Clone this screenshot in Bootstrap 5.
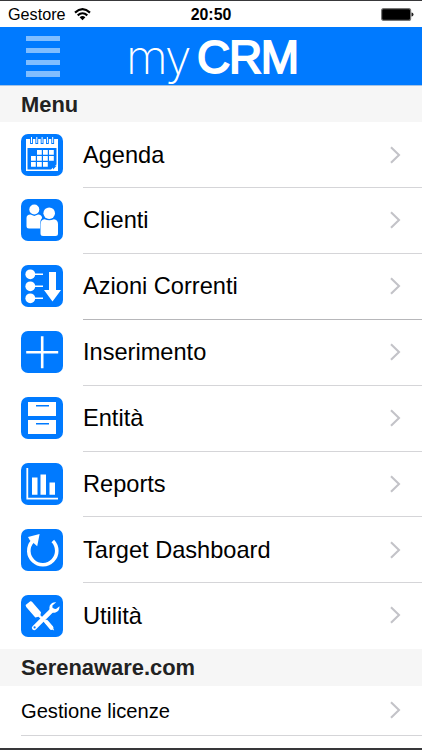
<!DOCTYPE html>
<html lang="it">
<head>
<meta charset="utf-8">
<meta name="viewport" content="width=device-width, initial-scale=1">
<title>myCRM</title>
<link rel="stylesheet" href="https://cdn.jsdelivr.net/npm/bootstrap@5.3.0/dist/css/bootstrap.min.css">
<style>
body{font-family:"Liberation Sans",Arial,sans-serif;color:#000;background:#fff}
.screen{height:750px;border-top:1px solid #38383a;border-bottom:2px solid #38383a}
.status{height:26px;font-size:16.2px;padding:1px 8px 0;display:grid;grid-template-columns:1fr auto 1fr}
.clock{font-weight:700;font-size:15.9px}
.topbar{height:59px;background:#007aff;border-bottom:1px solid #a5c3e4;padding-left:26px}
.bars{display:grid;gap:6.5px;width:34px;padding-top:9px}
.bars i{height:5.3px;background:#80bdff}
.logo{color:#fff;line-height:60px;margin-left:66px;white-space:nowrap}
.logo-my{font-family:Inter,sans-serif;font-weight:200;font-size:48px;letter-spacing:-1.8px;width:71px;line-height:59px}
.logo-crm{font-weight:400;font-size:46px;letter-spacing:-1.3px;-webkit-text-stroke:1.8px #fff}
.section-head{height:36.4px;background:#f6f6f6;color:#222;font-size:21.9px;font-weight:700;line-height:38px;padding-left:21px;margin:0}
.menu-row{height:65.85px;padding-left:21px;color:#000}
.menu-row .tile{width:42px;height:42px;margin:0 20px 1.4px 0}
.label-cell{font-size:23.6px;padding-top:1px;border-bottom:1px solid #d5d5d8;padding-right:21px}
.menu-row.strong-line .label-cell{border-color:#b7b7ba}
.menu-row:last-child .label-cell{border-color:transparent}
.small-row{height:50.6px;margin-left:21px;padding:1px 21px 0 0;font-size:20.15px;border-bottom:1px solid #d5d5d8;color:#000}
.tile{fill:#fff;stroke:none}
.tile .bg{fill:#007aff}
.tile .cut{fill:#007aff}
.tile .line{fill:none;stroke:#fff}
.chev{width:12px;height:20px;margin-bottom:1.5px;fill:none;stroke:#c3c3c8;stroke-width:2.1}
</style>
<script src="https://cdn.jsdelivr.net/npm/bootstrap@5.3.0/dist/js/bootstrap.bundle.min.js"></script>
</head>
<body>
<svg class="d-none"><symbol id="chev" viewBox="0 0 12 20"><path d="M2 2.2 10 10 2 17.8"/></symbol></svg>
<div class="screen overflow-hidden">
<div class="status align-items-center">
 <div class="d-flex align-items-center gap-2"><span>Gestore</span>
  <svg width="17" height="13" viewBox="0 0 17 13" fill="none" stroke="#000" stroke-width="2.1"><path d="M1 4.6Q8.5-2.2 16 4.6M3.7 7.4Q8.5 3.1 13.3 7.4"/><path d="M5.6 9.2Q8.5 6.8 11.4 9.2L8.5 12.3Z" fill="#000" stroke="none"/></svg></div>
 <span class="clock">20:50</span>
 <svg class="ms-auto" width="33" height="13" viewBox="0 0 33 13"><rect x=".6" y=".6" width="29" height="11.8" rx="2" fill="#000" stroke="#777" stroke-width="1.2"/><path d="M30.5 4.5q2 0 2 2t-2 2z" fill="#222"/></svg>
</div>
<header class="topbar d-flex">
 <div class="bars align-content-start"><i></i><i></i><i></i><i></i></div>
 <div class="logo d-flex"><span class="logo-my">my</span><span class="logo-crm">CRM</span></div>
</header>
<h2 class="section-head">Menu</h2>
<nav>
 <a class="menu-row d-flex align-items-center text-decoration-none" href="#"><svg class="tile flex-shrink-0" viewBox="0 0 42 42"><rect class="bg" width="42" height="42" rx="7"/><path d="M5 5H37V37H5Z"/><path class="cut" d="M6.5 14H35.5V30.5L30 35.5H6.5Z"/><path d="M16 16h4.8v4.8H16zM22 16h4.8v4.8H22zM28 16h4.8v4.8H28zM10 22h4.8v4.8H10zM16 22h4.8v4.8H16zM22 22h4.8v4.8H22zM28 22h4.8v4.8H28zM10 28h4.8v4.8H10zM16 28h4.8v4.8H16zM22 28h4.8v4.8H22z"/><path class="cut" d="M32 35.5v-3.8h3.7z"/><path d="M10.5 3v7M15.8 3v7M21.1 3v7M26.4 3v7M31.7 3v7" stroke="#007aff" stroke-width="2.8"/><path d="M10.5 3v6M15.8 3v6M21.1 3v6M26.4 3v6M31.7 3v6" stroke="#fff" stroke-width="1"/></svg><span class="label-cell d-flex flex-grow-1 h-100 align-items-center justify-content-between">Agenda<svg class="chev"><use href="#chev"/></svg></span></a>
 <a class="menu-row d-flex align-items-center text-decoration-none" href="#"><svg class="tile flex-shrink-0" viewBox="0 0 42 42"><rect class="bg" width="42" height="42" rx="7"/><circle cx="13.3" cy="10.5" r="5"/><path d="M5.5 19q0-3.3 4-3.5l3.8 1.5 3.8-1.5q3.7 0 4 3.5-2 2-2 5v5.5H8q-2.5 0-2.5-2.5z"/><circle cx="28.2" cy="14" r="7.3" class="cut"/><circle cx="28.2" cy="14.2" r="5.8"/><path d="M19.5 25q0-4.2 4-4.8 4.7 2.3 9.4 0 4.1.6 4.1 4.8v9.5q0 2.5-2.5 2.5H22q-2.5 0-2.5-2.5z"/></svg><span class="label-cell d-flex flex-grow-1 h-100 align-items-center justify-content-between">Clienti<svg class="chev"><use href="#chev"/></svg></span></a>
 <a class="menu-row strong-line d-flex align-items-center text-decoration-none" href="#"><svg class="tile flex-shrink-0" viewBox="0 0 42 42"><rect class="bg" width="42" height="42" rx="7"/><circle cx="9.3" cy="9.3" r="4.9"/><circle cx="9.3" cy="21.3" r="4.9"/><circle cx="9.3" cy="33.3" r="4.9"/><path class="line" stroke-width="1.5" d="M9 9.3h13M9 21.3h13M9 33.3h13"/><path d="M28 7h7v18h5l-8.5 11.5L23 25h5z"/></svg><span class="label-cell d-flex flex-grow-1 h-100 align-items-center justify-content-between">Azioni Correnti<svg class="chev"><use href="#chev"/></svg></span></a>
 <a class="menu-row d-flex align-items-center text-decoration-none" href="#"><svg class="tile flex-shrink-0" viewBox="0 0 42 42"><rect class="bg" width="42" height="42" rx="7"/><path class="line" stroke-width="2.6" d="M21.2 5.2v32M5.2 21.3h32"/></svg><span class="label-cell d-flex flex-grow-1 h-100 align-items-center justify-content-between">Inserimento<svg class="chev"><use href="#chev"/></svg></span></a>
 <a class="menu-row d-flex align-items-center text-decoration-none" href="#"><svg class="tile flex-shrink-0" viewBox="0 0 42 42"><rect class="bg" width="42" height="42" rx="7"/><path d="M7 5h28v14H7zM7 23h28v14H7z"/><path class="cut" d="M15 8h13v1.6H15zM15 26h13v1.6H15z"/></svg><span class="label-cell d-flex flex-grow-1 h-100 align-items-center justify-content-between">Entità<svg class="chev"><use href="#chev"/></svg></span></a>
 <a class="menu-row d-flex align-items-center text-decoration-none" href="#"><svg class="tile flex-shrink-0" viewBox="0 0 42 42"><rect class="bg" width="42" height="42" rx="7"/><path class="line" stroke-width="1.8" d="M6.3 5v30.7H37"/><path d="M11 14.5h5.5v17.3H11zM19.5 11.5H25v20.3h-5.5zM28.5 19.5H34v12.3h-5.5z"/></svg><span class="label-cell d-flex flex-grow-1 h-100 align-items-center justify-content-between">Reports<svg class="chev"><use href="#chev"/></svg></span></a>
 <a class="menu-row d-flex align-items-center text-decoration-none" href="#"><svg class="tile flex-shrink-0" viewBox="0 0 42 42"><rect class="bg" width="42" height="42" rx="7"/><path class="line" stroke-width="3.6" d="M11.3 12.5A14 14 0 1 0 31.8 12"/><path d="M7 8 18.6 5 16.2 17.3 13.4 14.8 8.8 11.2Z"/></svg><span class="label-cell d-flex flex-grow-1 h-100 align-items-center justify-content-between">Target Dashboard<svg class="chev"><use href="#chev"/></svg></span></a>
 <a class="menu-row d-flex align-items-center text-decoration-none" href="#"><svg class="tile flex-shrink-0" viewBox="0 0 42 42"><rect class="bg" width="42" height="42" rx="7"/><path d="M4.6 10 9.3 6.3Q10.5 6 11.2 7L20 17.3 19.4 20.3 31.6 31.8 33.2 35.4 30.5 34.2 17.5 21.8 14.3 22.5 5.2 12Z"/><path class="line" stroke-width="4.2" stroke-linecap="round" d="m25.5 27 4.8 5.7"/><path class="line" stroke-width="4.6" stroke-linecap="round" d="M13.2 32.8 31 15.2"/><path d="M35.2 7.2Q30.8 6.8 28.8 10.5 27.7 13 29 16.2 31.2 18.3 34.5 17.5 38.8 16 38.5 11.2L35 14 31.5 13.4 31.4 10.4Z"/><circle class="cut" cx="13.6" cy="32.4" r="1.1"/></svg><span class="label-cell d-flex flex-grow-1 h-100 align-items-center justify-content-between">Utilità<svg class="chev"><use href="#chev"/></svg></span></a>
</nav>
<h2 class="section-head">Serenaware.com</h2>
<a class="small-row d-flex align-items-center justify-content-between text-decoration-none" href="#">Gestione licenze<svg class="chev"><use href="#chev"/></svg></a>
</div>
</body>
</html>
